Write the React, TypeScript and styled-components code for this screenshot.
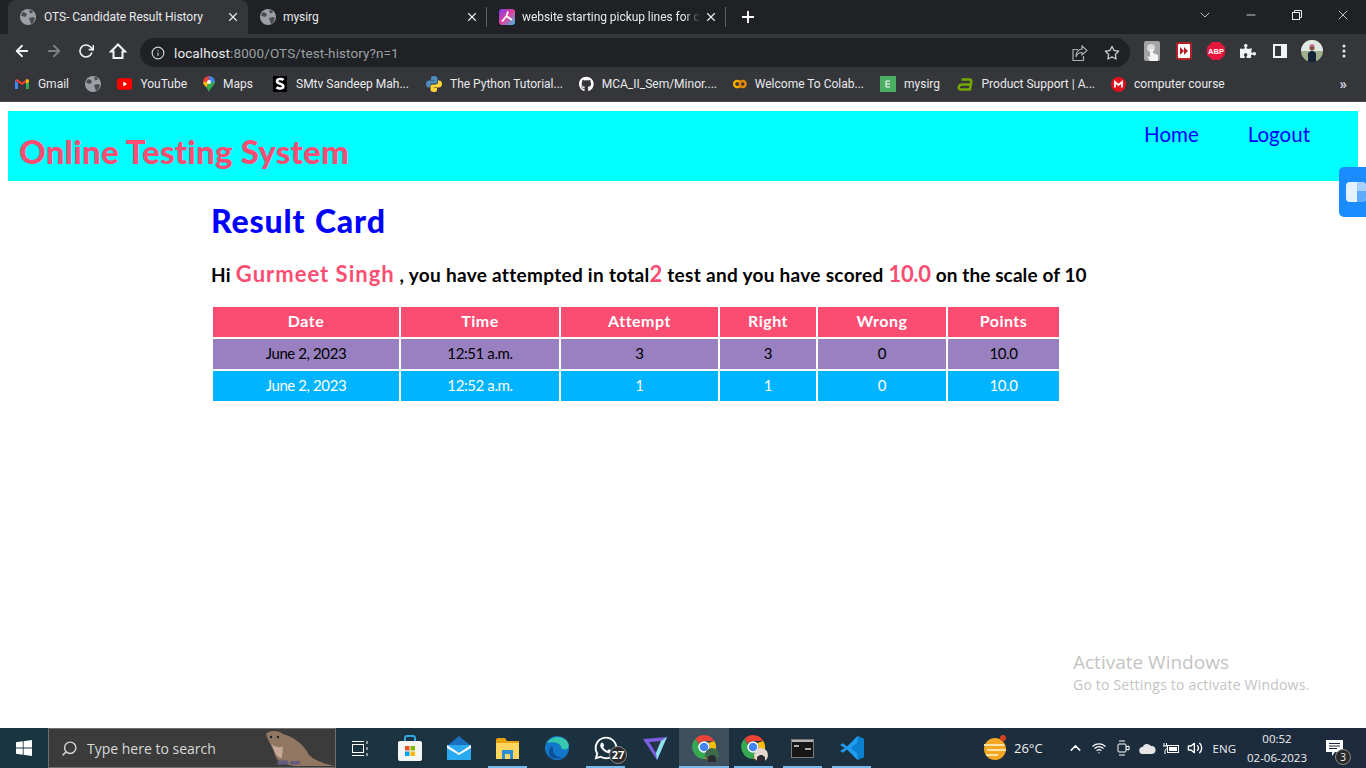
import { ReactNode } from "react";
import styled, { createGlobalStyle } from "styled-components";
import { FaGithub, FaPuzzlePiece, FaWhatsapp } from "react-icons/fa";
import {
    FiArrowLeft, FiArrowRight, FiRotateCw, FiInfo, FiStar, FiChevronDown,
    FiMinus, FiX, FiPlus, FiChevronUp, FiSearch, FiVolume2, FiWifi,
} from "react-icons/fi";

const GlobalStyle = createGlobalStyle`
    html, body { margin: 0; padding: 0; background: #fff; }
    * { box-sizing: border-box; }
`;

const Screen = styled.div`
    position: relative;
    width: 1366px;
    height: 768px;
    overflow: hidden;
    display: flex;
    flex-direction: column;
    font-family: "Lato", "Liberation Sans", sans-serif;
    font-variant-ligatures: none;
`;

/* browser chrome */
const TabStrip = styled.div`
    height: 34px;
    background: #202124;
    display: flex;
    padding-left: 8px;
    font-family: "Roboto", "Liberation Sans", sans-serif;
    font-size: 12px;
    color: #e8eaed;
`;
const Tab = styled.div<{ $active?: boolean }>`
    width: ${p => p.$active ? "240px" : "239px"};
    height: 34px;
    padding: 0 8px 0 12px;
    display: flex;
    align-items: center;
    gap: ${p => p.$active ? "8px" : "7px"};
    border-radius: 8px 8px 0 0;
    background: ${p => p.$active ? "#35363a" : "transparent"};
`;
const TabTitle = styled.span<{ $fade?: boolean }>`
    flex: 1;
    white-space: nowrap;
    letter-spacing: -0.05px;
    margin-right: ${p => p.$fade ? "-4px" : "0"};
    mask-image: ${p => p.$fade ? "linear-gradient(90deg, #000 90%, transparent 100%)" : "none"};
`;
const TabDivider = styled.div`
    width: 1px;
    height: 20px;
    margin-top: 7px;
    background: #5f6368;
    margin-left: -1px;
`;
const NewTab = styled.div`
    width: 44px;
    display: flex;
    align-items: center;
    justify-content: center;
    color: #fff;
`;
const WindowControls = styled.div`
    margin-left: auto;
    display: flex;
    color: #e8eaed;
`;
const WindowButton = styled.div`
    width: 46px;
    height: 30px;
    display: flex;
    align-items: center;
    justify-content: center;
`;
const Toolbar = styled.div`
    height: 33px;
    background: #35363a;
    display: flex;
    align-items: flex-start;
    padding: 0 6px;
`;
const ToolButton = styled.div<{ $dim?: boolean }>`
    width: 32px;
    height: 33px;
    display: flex;
    align-items: center;
    justify-content: center;
    color: ${p => p.$dim ? "#7d7f83" : "#f1f3f4"};
`;
const AddressBar = styled.div`
    width: 990px;
    height: 29px;
    margin: 4px 6px 0 6px;
    border-radius: 15px;
    background: #202124;
    display: flex;
    align-items: center;
    padding: 0 7px 0 11px;
    font-family: "Roboto", "Liberation Sans", sans-serif;
    font-size: 13.5px;
    color: #9aa0a6;
    gap: 9px;
`;
const Url = styled.span`
    flex: 1;
    letter-spacing: 0.1px;
    b { font-weight: 400; color: #e8eaed; }
`;
const AddressAction = styled.div`
    width: 23px;
    display: flex;
    justify-content: center;
    color: #c4c7c5;
`;
const BookmarkBar = styled.div`
    height: 35px;
    background: #35363a;
    border-bottom: 1px solid #4a4b4f;
    display: flex;
    align-items: center;
    padding-left: 14px;
    gap: 16px;
    font-family: "Roboto", "Liberation Sans", sans-serif;
    font-size: 12px;
    color: #e8eaed;
`;
const Bookmark = styled.div<{ $w: number }>`
    width: ${p => p.$w}px;
    display: flex;
    align-items: center;
    gap: 8px;
    white-space: nowrap;
    flex: none;
`;
const MoreBookmarks = styled.div`
    margin-left: auto;
    margin-right: 19px;
    font-size: 15px;
    font-weight: 700;
    color: #dadce0;
`;

/* page */
const Page = styled.main`
    flex: 1;
    background: #fff;
    padding: 9px 8px 0;
`;
const SiteHeader = styled.header`
    height: 70px;
    background: #00ffff;
    display: flex;
    justify-content: space-between;
    padding-left: 11px;
`;
const Brand = styled.h1`
    margin: 19px 0 0;
    font-size: 33px;
    line-height: 42px;
    font-weight: 900;
    letter-spacing: 0.2px;
    color: #fb4d72;
`;
const Nav = styled.nav`
    display: flex;
    gap: 49px;
    padding: 9px 48px 0 0;
    font-size: 20.5px;
    line-height: 28px;
    color: #0000ff;
`;
const Content = styled.section`
    padding: 21px 0 0 203px;
`;
const Heading = styled.h2`
    margin: 0;
    font-size: 32px;
    line-height: 38px;
    font-weight: 900;
    letter-spacing: 0.85px;
    word-spacing: 1px;
    color: #0000ff;
`;
const Greeting = styled.h3`
    margin: 19px 0 0 0;
    font-size: 19px;
    line-height: 30px;
    font-weight: 700;
    letter-spacing: 0.3px;
    color: #000;
    white-space: nowrap;
`;
const Accent = styled.span<{ $spread?: number }>`
    font-size: 22px;
    color: #fb4d72;
    letter-spacing: ${p => p.$spread ?? 0}px;
`;
const GreetingTail = styled.span`
    letter-spacing: 0.1px;
`;
const ResultTable = styled.table`
    margin-top: 15px;
    width: 850px;
    table-layout: fixed;
    border-collapse: separate;
    border-spacing: 2px;
    font-size: 15px;
    text-align: center;
`;
const HeadCell = styled.th`
    height: 30px;
    padding: 0 0 4px;
    background: #fb4d72;
    color: #fff;
    font-size: 16px;
    font-weight: 700;
    letter-spacing: 0.5px;
`;
const Cell = styled.td<{ $alt?: boolean }>`
    height: 30px;
    padding: 0 0 3px;
    background: ${p => p.$alt ? "#00b4ff" : "#9980c0"};
    color: ${p => p.$alt ? "#fff" : "#000"};
    letter-spacing: -0.4px;
`;

/* taskbar */
const Taskbar = styled.footer`
    height: 40px;
    flex: none;
    display: flex;
    align-items: stretch;
    background: linear-gradient(90deg, #1a3542 0%, #1c3140 50%, #1c2a3c 100%);
    font-family: "Open Sans", "Liberation Sans", sans-serif;
    color: #f1f1f1;
`;
const StartButton = styled.div`
    width: 48px;
    display: flex;
    align-items: center;
    justify-content: center;
`;
const SearchBox = styled.div`
    width: 288px;
    display: flex;
    align-items: center;
    background: #3b3b3b;
    border: 1px solid #6f6f6f;
    padding-left: 12px;
    gap: 9px;
    font-size: 14px;
    color: #d8d8d8;
    position: relative;
    overflow: hidden;
`;
const SearchArt = styled.div`
    position: absolute;
    right: 0;
    top: 0;
`;
const TaskSlot = styled.div<{ $w?: number; $active?: boolean; $running?: boolean }>`
    width: ${p => p.$w ?? 49}px;
    display: flex;
    align-items: center;
    justify-content: center;
    position: relative;
    background: ${p => p.$active ? "#3d4f5c" : "transparent"};
    &::after {
        content: "";
        display: ${p => p.$running || p.$active ? "block" : "none"};
        position: absolute;
        left: ${p => p.$active ? 0 : 5}px;
        right: ${p => p.$active ? 0 : 5}px;
        bottom: 0;
        height: 2px;
        background: #76b9ed;
    }
`;
const AppBadge = styled.span`
    position: absolute;
    right: 3px;
    bottom: 4px;
    width: 18px;
    height: 18px;
    border-radius: 50%;
    background: #2b2b2b;
    border: 1px solid #8a8a8a;
    font-size: 11px;
    font-weight: 700;
    line-height: 16px;
    text-align: center;
    color: #fff;
`;
const Weather = styled.div`
    margin-left: auto;
    display: flex;
    align-items: center;
    gap: 7px;
    font-size: 13px;
    margin-right: 24px;
`;
const Tray = styled.div`
    display: flex;
    align-items: center;
    gap: 7px;
    margin-right: 7px;
`;
const TrayIcon = styled.div`
    width: 17px;
    display: flex;
    justify-content: center;
    color: #fff;
`;
const Lang = styled.span`
    font-size: 11.5px;
    margin-left: 2px;
`;
const Clock = styled.div`
    width: 68px;
    text-align: center;
    font-size: 11.5px;
    line-height: 19px;
    padding-top: 1px;
`;
const Notify = styled.div`
    width: 46px;
    position: relative;
    display: flex;
    align-items: center;
    justify-content: center;
    margin-right: 9px;
`;
const NotifyBadge = styled.span`
    position: absolute;
    right: 6px;
    bottom: 3px;
    width: 16px;
    height: 16px;
    border-radius: 50%;
    background: #2b2b2b;
    border: 1px solid #8a8a8a;
    font-size: 10px;
    line-height: 14px;
    text-align: center;
`;

/* overlays */
const SideWidget = styled.div`
    position: absolute;
    right: 0;
    top: 167px;
    width: 27px;
    height: 50px;
    background: #1a8cff;
    border-radius: 5px 0 0 5px;
    display: flex;
    align-items: center;
    padding-left: 7px;
`;
const Watermark = styled.div`
    position: absolute;
    left: 1073px;
    top: 650px;
    font-family: "Open Sans", "Liberation Sans", sans-serif;
    color: #c4c4c4;
    font-size: 14px;
    letter-spacing: 0.2px;
    line-height: 20px;
    white-space: nowrap;
    strong { display: block; font-weight: 400; font-size: 19px; line-height: 25px; letter-spacing: 0; }
`;

/* drawn icons */
const Globe = () => (
    <svg width="16" height="16" viewBox="0 0 16 16">
        <circle cx="8" cy="8" r="8" fill="#9aa0a6" />
        <path d="M3 3l3 1 1 2-2 2-3-1-1-1zM9 9l4-1 2 1-2 5-2 1-1-3zM9 1l3 .5 1 2-3 1z" fill="#4a4b4f" />
    </svg>
);
const Gmail = () => (
    <svg width="16" height="16" viewBox="0 0 16 16">
        <path d="M1 4v9h3V7z" fill="#4285f4" />
        <path d="M12 7v6h3V4z" fill="#34a853" />
        <path d="M1 4l7 5 7-5-2-1-5 3.500L3 3z" fill="#ea4335" />
        <path d="M12 4l1-1 2 1v2l-3 2z" fill="#fbbc04" />
    </svg>
);
const YouTube = () => (
    <svg width="16" height="12" viewBox="0 0 16 12">
        <rect width="16" height="12" rx="3" fill="#f00" />
        <path d="M6.500 3.500v5l4-2.500z" fill="#fff" />
    </svg>
);
const MapPin = () => (
    <svg width="12" height="16" viewBox="0 0 12 16">
        <path d="M6 0a6 6 0 016 6L6 6z" fill="#4285f4" />
        <path d="M0 6a6 6 0 016-6v6z" fill="#ea4335" />
        <path d="M0 6h6l-2.500 5.500C2 10 0 8 0 6z" fill="#fbbc04" />
        <path d="M12 6c0 3-4 5-6 10l-2.500-4.500L6 6z" fill="#34a853" />
        <circle cx="6" cy="6" r="2" fill="#fff" />
    </svg>
);
const BlackS = () => (
    <svg width="16" height="16" viewBox="0 0 16 16">
        <rect x="1" width="14" height="16" fill="#000" />
        <path d="M11.500 4C10 2.500 5 2.500 5 5.300c0 3 6.300 2 6.300 5 0 2.700-5 2.700-6.800 1" fill="none" stroke="#fff" strokeWidth="2.600" />
    </svg>
);
const PythonLogo = () => (
    <svg width="16" height="16" viewBox="0 0 16 16">
        <path d="M8 0C5 0 5 1 5 2.500V4h3.200v.6H3.200C1 4.600 0 6 0 8s1 3.500 2.800 3.500H4V9.800c0-1.300 1-2.300 2.300-2.300h3.400c1 0 1.800-.8 1.800-1.800V2.500C11.500 1 10.500 0 8 0z" fill="#4b8bbe" />
        <path d="M8 16c3 0 3-1 3-2.500V12H7.800v-.6h5C15 11.400 16 10 16 8s-1-3.500-2.800-3.500H12v1.700c0 1.300-1 2.300-2.300 2.300H6.300c-1 0-1.800.8-1.800 1.800v3.200C4.500 15 5.500 16 8 16z" fill="#ffd43b" />
    </svg>
);
const Colab = () => (
    <svg width="17" height="12" viewBox="0 0 17 12" fill="none" strokeWidth="3">
        <circle cx="12" cy="6" r="3.600" stroke="#e8860a" />
        <path d="M8 3.200a3.900 3.900 0 100 5.600" stroke="#f9ab00" />
    </svg>
);
const SheetMark = () => (
    <svg width="16" height="16" viewBox="0 0 16 16">
        <rect width="16" height="16" fill="#4caf63" />
        <path d="M6 5h4M6 8h4M6 11h4M6 5v6" stroke="#fff" strokeWidth="1" fill="none" />
    </svg>
);
const GreenA = () => (
    <svg width="18" height="16" viewBox="0 0 18 16">
        <path d="M5 3h8c2 0 3 1 2.500 3L14 14H5c-2.500 0-3.500-1-3-2.800C2.500 9 4 8.500 6 8.500h8.500" fill="none" stroke="#76a800" strokeWidth="2.800" />
    </svg>
);
const RedM = () => (
    <svg width="15" height="15" viewBox="0 0 15 15">
        <circle cx="7.500" cy="7.500" r="7.500" fill="#e3101e" />
        <path d="M4 10.500V5l3.500 3L11 5v5.500" fill="none" stroke="#fff" strokeWidth="1.800" />
    </svg>
);
const GradientApp = () => (
    <svg width="16" height="16" viewBox="0 0 16 16">
        <defs>
            <linearGradient id="tabapp" x1="0" y1="0" x2="1" y2="1">
                <stop offset="0" stopColor="#7a3cf0" />
                <stop offset=".5" stopColor="#e0409a" />
                <stop offset="1" stopColor="#35c6e8" />
            </linearGradient>
        </defs>
        <rect width="16" height="16" rx="3" fill="url(#tabapp)" />
        <path d="M9 2.500L7.500 7 3 12.500M7.500 7L13 11" stroke="#fff" strokeWidth="1.800" fill="none" />
    </svg>
);
const RestoreIcon = () => (
    <svg width="10" height="10" viewBox="0 0 10 10" fill="none" stroke="#e8eaed">
        <rect x=".5" y="2.500" width="7" height="7" />
        <path d="M2.500 2.500V.5h7v7h-2" />
    </svg>
);
const HomeOutline = () => (
    <svg width="18" height="18" viewBox="0 0 18 18" fill="none" stroke="#f1f3f4" strokeWidth="2">
        <path d="M2 9.500L9 2.500l7 7h-2.500V16h-9V9.500z" />
    </svg>
);
const ShareOutline = () => (
    <svg width="16" height="16" viewBox="0 0 16 16" fill="none" stroke="#a9acb0" strokeWidth="1.200">
        <path d="M6 4.500H1v11h10.500V11" />
        <path d="M10 1l5 4.500-5 4.500V7.500C7 7.500 5 9 4 12c0-4 2-7.500 6-8z" />
    </svg>
);
const TouchExt = () => (
    <svg width="16" height="20" viewBox="0 0 16 20">
        <rect width="16" height="20" rx="2" fill="#a3a3a3" />
        <circle cx="7" cy="7" r="4" fill="#d9d9d9" />
        <path d="M6 8h3v4l5 2v6H6l-3-5 3 1z" fill="#f3f3f3" />
    </svg>
);
const SkipExt = () => (
    <svg width="16" height="18" viewBox="0 0 16 18">
        <rect x="1" y="1" width="14" height="16" rx="2" fill="#fff" stroke="#b3202a" strokeWidth="2" />
        <path d="M4 5l4 4-4 4zM8 5l4 4-4 4z" fill="#b3202a" />
    </svg>
);
const AdblockPlus = () => (
    <svg width="18" height="18" viewBox="0 0 18 18">
        <path d="M5.300 0h7.400L18 5.300v7.400L12.700 18H5.300L0 12.700V5.300z" fill="#e6173d" />
        <text x="9" y="12" fontSize="7.500" fontWeight="700" fontFamily="Liberation Sans" fill="#fff" textAnchor="middle">ABP</text>
    </svg>
);
const SidePanel = () => (
    <svg width="14" height="14" viewBox="0 0 14 14">
        <rect width="14" height="14" fill="#f1f3f4" />
        <rect x="2" y="2" width="6" height="10" fill="#35363a" />
    </svg>
);
const Avatar = () => (
    <svg width="22" height="22" viewBox="0 0 22 22">
        <circle cx="11" cy="11" r="11" fill="#9fb08f" />
        <path d="M0 11a11 11 0 0122 0z" fill="#dfe7e0" />
        <path d="M7 22V13l3-2h2l3 2v9z" fill="#12233b" />
        <circle cx="11" cy="8" r="2.500" fill="#7a5340" />
        <path d="M8.500 6.500a2.500 2.500 0 015 0z" fill="#d9679f" />
    </svg>
);
const KebabMenu = () => (
    <svg width="4" height="14" viewBox="0 0 4 14" fill="#e8eaed">
        <circle cx="2" cy="2" r="1.500" /><circle cx="2" cy="7" r="1.500" /><circle cx="2" cy="12" r="1.500" />
    </svg>
);
const WindowsLogo = () => (
    <svg width="16" height="16" viewBox="0 0 16 16" fill="#fff">
        <path d="M0 2.300L6.800 1.300V7.600H0zM7.600 1.200L16 0V7.600H7.600zM0 8.400H6.800V14.700L0 13.700zM7.600 8.400H16V16L7.600 14.800z" />
    </svg>
);
const Otter = () => (
    <svg width="72" height="38" viewBox="0 0 72 38">
        <path d="M3 5C6 1 16 1 20 5c10 3 20 9 26 21 6 6 16 9 26 11H40C26 38 14 34 12 26 11 20 5 13 3 5z" fill="#917662" />
        <path d="M9 15c3 4 9 4 11 2l-1 12c-5 0-8-6-10-14z" fill="#c9a79a" />
        <path d="M14 32l10-1 2 4-11 1zM27 32l9 0 2 3-10 1z" fill="#655a7d" />
        <circle cx="8" cy="8" r="1.200" fill="#222" /><circle cx="15" cy="8" r="1.200" fill="#222" />
    </svg>
);
const TaskView = () => (
    <svg width="17" height="17" viewBox="0 0 17 17" fill="none" stroke="#fff">
        <rect x=".5" y="4.500" width="11" height="8" />
        <path d="M0 1.500h12M0 15.500h12M15 1v3M15 7v3M15 13v3" />
    </svg>
);
const StoreIcon = () => (
    <svg width="24" height="26" viewBox="0 0 24 26">
        <path d="M7 6V3a2 2 0 012-2h6a2 2 0 012 2v3" fill="none" stroke="#2ea7e0" strokeWidth="2" />
        <rect y="6" width="24" height="20" rx="2" fill="#f5f5f5" />
        <rect x="7" y="11" width="4.500" height="4.500" fill="#f25022" />
        <rect x="12.500" y="11" width="4.500" height="4.500" fill="#7fba00" />
        <rect x="7" y="16.500" width="4.500" height="4.500" fill="#00a4ef" />
        <rect x="12.500" y="16.500" width="4.500" height="4.500" fill="#ffb900" />
    </svg>
);
const MailIcon = () => (
    <svg width="24" height="24" viewBox="0 0 24 24">
        <path d="M0 10L12 0l12 10v14H0z" fill="#1a6fc0" />
        <path d="M0 9h24v15H0z" fill="#29a9ef" />
        <path d="M0 9l12 8 12-8v3l-12 7-12-7z" fill="#fff" />
    </svg>
);
const FolderIcon = () => (
    <svg width="23" height="21" viewBox="0 0 23 21">
        <path d="M0 2a2 2 0 012-2h7l2 3h12v4H0z" fill="#e8a40f" />
        <path d="M0 5h23v16H0z" fill="#ffd75e" />
        <path d="M6 12h11v9h-3v-5H9v5H6z" fill="#2a8fd8" />
    </svg>
);
const EdgeIcon = () => (
    <svg width="24" height="24" viewBox="0 0 24 24">
        <circle cx="12" cy="12" r="12" fill="#1377c9" />
        <path d="M2 7C5 1 14-1 20 3c4 3 5 8 2 10-3 1-6 0-6-2 0-4-8-6-14-4z" fill="#36c7b0" />
        <path d="M8 14c0 5 5 8 10 7 1 0-8 4-13-1-2-3-1-7 1-9 2-1 2 1 2 3z" fill="#0c4f96" />
    </svg>
);
const PrismIcon = () => (
    <svg width="24" height="23" viewBox="0 0 24 23">
        <path d="M0 2l24-2-10 23z" fill="#7c5fe0" />
        <path d="M6 5l12-1-5 12z" fill="#24344a" />
        <path d="M24 0l-10 23-1-7 5-12z" fill="#8be3e8" />
    </svg>
);
const ChromeIcon = () => (
    <>
        <path d="M12 0a12 12 0 0110.400 6H12a6 6 0 00-5.200 3L3.600 3.700A12 12 0 0112 0z" fill="#ea4335" />
        <path d="M22.400 6A12 12 0 0112 24l5.200-9A6 6 0 0016 8z" fill="#fbbc04" />
        <path d="M12 24A12 12 0 013.600 3.700L8 12a6 6 0 006 5.700z" fill="#34a853" />
        <circle cx="12" cy="12" r="5" fill="#4285f4" stroke="#fff" strokeWidth="1.500" />
    </>
);
const ChromeWithFace = ({ tone }: { tone: string }) => (
    <svg width="27" height="27" viewBox="0 0 27 27" style={{ marginLeft: 2 }}>
        <ChromeIcon />
        <circle cx="20" cy="20" r="7" fill={tone} />
        <path d="M16 27v-5l3-2h2l3 2v5z" fill="#2a2a33" />
    </svg>
);
const Terminal = () => (
    <svg width="23" height="19" viewBox="0 0 23 19">
        <rect x=".5" y=".5" width="22" height="18" fill="#171717" stroke="#7b7b7b" />
        <rect x="1" y="1" width="21" height="2" fill="#b5b5b5" />
        <path d="M3 7h5M14 10h6" stroke="#ddd" strokeWidth="1.500" />
    </svg>
);
const VsCode = () => (
    <svg width="24" height="24" viewBox="0 0 24 24">
        <path d="M17.500 0L24 3v18l-6.500 3L7 13.500l-4 3.300L0 15l5-3-5-3 3-1.800 4 3.300z" fill="#1f9cf0" />
        <path d="M17.500 0L24 3v18l-6.500 3zm0 6.500L11 12l6.500 5.500z" fill="#0b7fd0" />
    </svg>
);
const SunIcon = () => (
    <svg width="23" height="26" viewBox="0 0 23 26">
        <circle cx="11" cy="14" r="11" fill="#f5a623" />
        <path d="M0 10h20M3 15h19M2 20h12" stroke="#fde3a7" strokeWidth="2" />
        <circle cx="19" cy="3" r="3" fill="#d9401f" />
    </svg>
);
const CameraTray = () => (
    <svg width="14" height="18" viewBox="0 0 14 18" fill="none" stroke="#fff">
        <rect x="2" y="5" width="8" height="8" rx="1" />
        <path d="M10 8l3-1v4l-3-1M3 2h6M3 16h6" />
    </svg>
);
const CloudTray = () => (
    <svg width="17" height="11" viewBox="0 0 17 11" fill="#e6e6e6">
        <path d="M4 11a3.500 3.500 0 01-.5-7A5 5 0 0112 3a4 4 0 011 8z" />
    </svg>
);
const BatteryTray = () => (
    <svg width="17" height="13" viewBox="0 0 17 13" fill="none" stroke="#fff">
        <rect x="4.500" y="3.500" width="11" height="7" />
        <rect x="6" y="5" width="8" height="4" fill="#fff" stroke="none" />
        <path d="M1 1v3M3.500 1v3M0 4h4.500v2L2 8v4" />
    </svg>
);
const NotifyIcon = () => (
    <svg width="17" height="16" viewBox="0 0 17 16" fill="#fff">
        <path d="M0 0h17v12H9l-3 4v-4H0z" />
        <path d="M3 3.500h11M3 6h11M3 8.500h8" stroke="#1c2a3c" />
    </svg>
);
const WidgetMark = () => (
    <svg width="20" height="20" viewBox="0 0 20 20">
        <rect width="20" height="20" rx="4" fill="#e4f1ff" />
        <path d="M11 0h5a4 4 0 014 4v5h-9z" fill="#a5d0ff" />
        <path d="M11 9h9v7a4 4 0 01-4 4h-5z" fill="#5eaaff" />
    </svg>
);

const bookmarks: { w: number; icon: ReactNode; label?: string }[] = [
    { w: 55, icon: <Gmail />, label: "Gmail" },
    { w: 16, icon: <Globe /> },
    { w: 70, icon: <YouTube />, label: "YouTube" },
    { w: 53, icon: <MapPin />, label: "Maps" },
    { w: 138, icon: <BlackS />, label: "SMtv Sandeep Mah..." },
    { w: 137, icon: <PythonLogo />, label: "The Python Tutorial..." },
    { w: 138, icon: <FaGithub size={16} color="#fff" />, label: "MCA_II_Sem/Minor...." },
    { w: 131, icon: <Colab />, label: "Welcome To Colab..." },
    { w: 61, icon: <SheetMark />, label: "mysirg" },
    { w: 138, icon: <GreenA />, label: "Product Support | A..." },
    { w: 114, icon: <RedM />, label: "computer course" },
];

const columns = [
    { title: "Date", width: 186 },
    { title: "Time", width: 158 },
    { title: "Attempt", width: 157 },
    { title: "Right", width: 96 },
    { title: "Wrong", width: 128 },
    { title: "Points", width: 111 },
];

const results = [
    ["June 2, 2023", "12:51 a.m.", "3", "3", "0", "10.0"],
    ["June 2, 2023", "12:52 a.m.", "1", "1", "0", "10.0"],
];

function App() {
    return <Screen>
        <GlobalStyle />
        <TabStrip>
            <Tab $active>
                <Globe />
                <TabTitle>OTS- Candidate Result History</TabTitle>
                <FiX size={14} />
            </Tab>
            <Tab>
                <Globe />
                <TabTitle>mysirg</TabTitle>
                <FiX size={14} />
            </Tab>
            <TabDivider />
            <Tab>
                <GradientApp />
                <TabTitle $fade>website starting pickup lines for c</TabTitle>
                <FiX size={14} />
            </Tab>
            <TabDivider />
            <NewTab><FiPlus size={18} strokeWidth={2.5} /></NewTab>
            <WindowControls>
                <WindowButton><FiChevronDown size={16} strokeWidth={1.2} /></WindowButton>
                <WindowButton><FiMinus size={14} strokeWidth={1.4} /></WindowButton>
                <WindowButton><RestoreIcon /></WindowButton>
                <WindowButton><FiX size={16} strokeWidth={1.2} /></WindowButton>
            </WindowControls>
        </TabStrip>
        <Toolbar>
            <ToolButton><FiArrowLeft size={18} strokeWidth={2.4} /></ToolButton>
            <ToolButton $dim><FiArrowRight size={18} strokeWidth={2.4} /></ToolButton>
            <ToolButton><FiRotateCw size={16} strokeWidth={2.4} /></ToolButton>
            <ToolButton><HomeOutline /></ToolButton>
            <AddressBar>
                <FiInfo size={14} color="#d0d2d5" />
                <Url><b>localhost</b>:8000/OTS/test-history?n=1</Url>
                <AddressAction><ShareOutline /></AddressAction>
                <AddressAction><FiStar size={16} /></AddressAction>
            </AddressBar>
            <ToolButton><TouchExt /></ToolButton>
            <ToolButton><SkipExt /></ToolButton>
            <ToolButton><AdblockPlus /></ToolButton>
            <ToolButton><FaPuzzlePiece size={16} /></ToolButton>
            <ToolButton><SidePanel /></ToolButton>
            <ToolButton><Avatar /></ToolButton>
            <ToolButton><KebabMenu /></ToolButton>
        </Toolbar>
        <BookmarkBar>
            {bookmarks.map((b, i) => (
                <Bookmark key={i} $w={b.w}>
                    {b.icon}
                    {b.label && <span>{b.label}</span>}
                </Bookmark>
            ))}
            <MoreBookmarks>»</MoreBookmarks>
        </BookmarkBar>

        <Page>
            <SiteHeader>
                <Brand>Online Testing System</Brand>
                <Nav>
                    <span>Home</span>
                    <span>Logout</span>
                </Nav>
            </SiteHeader>
            <Content>
                <Heading>Result Card</Heading>
                <Greeting>
                    Hi <Accent $spread={1}>Gurmeet Singh</Accent> , you have attempted in total<Accent>2</Accent> test and you have scored <Accent $spread={-0.3}>10.0</Accent> <GreetingTail>on the scale of 10</GreetingTail>
                </Greeting>
                <ResultTable>
                    <colgroup>
                        {columns.map(c => <col key={c.title} width={c.width} />)}
                    </colgroup>
                    <thead>
                        <tr>{columns.map(c => <HeadCell key={c.title}>{c.title}</HeadCell>)}</tr>
                    </thead>
                    <tbody>
                        {results.map((row, i) => (
                            <tr key={i}>
                                {row.map((v, j) => <Cell key={j} $alt={i === 1}>{v}</Cell>)}
                            </tr>
                        ))}
                    </tbody>
                </ResultTable>
            </Content>
        </Page>

        <Taskbar>
            <StartButton><WindowsLogo /></StartButton>
            <SearchBox>
                <FiSearch size={17} style={{ transform: "scaleX(-1)" }} />
                <span>Type here to search</span>
                <SearchArt><Otter /></SearchArt>
            </SearchBox>
            <TaskSlot $w={49}><TaskView /></TaskSlot>
            <TaskSlot><StoreIcon /></TaskSlot>
            <TaskSlot><MailIcon /></TaskSlot>
            <TaskSlot $running><FolderIcon /></TaskSlot>
            <TaskSlot><EdgeIcon /></TaskSlot>
            <TaskSlot $running>
                <FaWhatsapp size={26} color="#fff" />
                <AppBadge>27</AppBadge>
            </TaskSlot>
            <TaskSlot><PrismIcon /></TaskSlot>
            <TaskSlot $w={50} $active><ChromeWithFace tone="#3d6a4a" /></TaskSlot>
            <TaskSlot $running><ChromeWithFace tone="#e5d8cf" /></TaskSlot>
            <TaskSlot $running><Terminal /></TaskSlot>
            <TaskSlot $running><VsCode /></TaskSlot>
            <Weather>
                <SunIcon />
                <span>26°C</span>
            </Weather>
            <Tray>
                <TrayIcon><FiChevronUp size={18} /></TrayIcon>
                <TrayIcon><FiWifi size={14} /></TrayIcon>
                <TrayIcon><CameraTray /></TrayIcon>
                <TrayIcon><CloudTray /></TrayIcon>
                <TrayIcon><BatteryTray /></TrayIcon>
                <TrayIcon><FiVolume2 size={16} /></TrayIcon>
                <Lang>ENG</Lang>
            </Tray>
            <Clock>00:52<br />02-06-2023</Clock>
            <Notify>
                <NotifyIcon />
                <NotifyBadge>3</NotifyBadge>
            </Notify>
        </Taskbar>

        <SideWidget><WidgetMark /></SideWidget>
        <Watermark>
            <strong>Activate Windows</strong>
            Go to Settings to activate Windows.
        </Watermark>
    </Screen>;
}
export default App;
